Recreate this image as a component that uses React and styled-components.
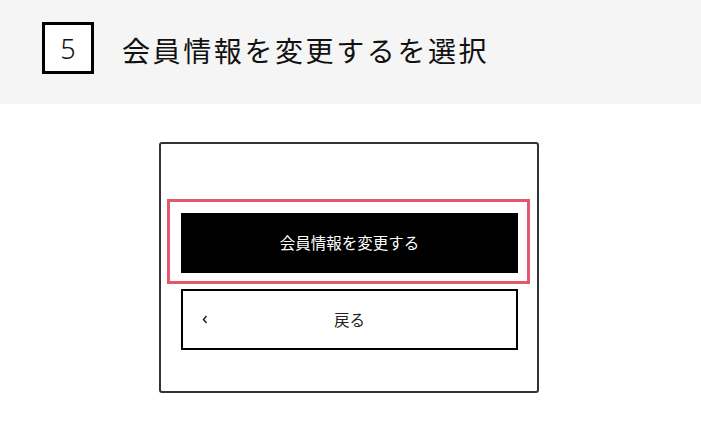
import React from "react";
import styled, { createGlobalStyle } from "styled-components";

const GlobalStyle = createGlobalStyle`
  * {
    box-sizing: border-box;
  }
  body {
    margin: 0;
    background: #fff;
    font-family: "Noto Sans CJK JP", "Noto Sans", sans-serif;
    color: #111;
  }
`;

const Header = styled.div`
  display: flex;
  align-items: center;
  height: 104px;
  padding-left: 42px;
  gap: 28px;
  background: #f5f5f5;
`;

const StepBox = styled.div`
  display: flex;
  align-items: center;
  justify-content: center;
  width: 52px;
  height: 52px;
  margin-top: -8px;
  border: 3px solid #000;
  background: #fff;
  font-family: "Noto Sans", sans-serif;
  font-size: 27px;
  font-weight: 300;
`;

const Title = styled.h1`
  margin: -4px 0 0;
  font-size: 28px;
  font-weight: 400;
  letter-spacing: 2.6px;
  color: #111;
`;

const Main = styled.div`
  display: flex;
  padding: 38px 0 0 159px;
`;

const Card = styled.div`
  width: 380px;
  height: 251px;
  padding: 55px 7px 0 6px;
  border: 2px solid #333;
  border-radius: 3px;
  display: flex;
  flex-direction: column;
  gap: 5px;
`;

const Highlight = styled.div`
  padding: 11px 9px 8px 11px;
  border: 3px solid #e4586e;
`;

const Button = styled.button`
  display: grid;
  grid-template-columns: 1fr auto 1fr;
  align-items: center;
  width: 100%;
  height: ${(p) => (p.$primary ? "60px" : "61px")};
  padding: 0;
  border: ${(p) => (p.$primary ? "none" : "2px solid #000")};
  background: ${(p) => (p.$primary ? "#000" : "#fff")};
  color: ${(p) => (p.$primary ? "#fff" : "#222")};
  font-family: "Noto Sans CJK JP", sans-serif;
  font-size: 15.5px;
  cursor: pointer;
`;

const BackButton = styled(Button)`
  width: auto;
  margin: 0 12px 0 14px;
`;

const Label = styled.span`
  grid-column: 2;
  margin-top: -2px;
`;

const Chevron = styled.svg`
  grid-column: 1;
  justify-self: start;
  margin-left: 19px;
`;

export default function App() {
  return (
    <>
      <GlobalStyle />
      <Header>
        <StepBox>5</StepBox>
        <Title>会員情報を変更するを選択</Title>
      </Header>
      <Main>
        <Card>
          <Highlight>
            <Button $primary>
              <Label>会員情報を変更する</Label>
            </Button>
          </Highlight>
          <BackButton>
            <Chevron width="6" height="9" viewBox="0 0 6 9">
              <polyline
                points="4.5,1 1.5,4.5 4.5,8"
                fill="none"
                stroke="#222"
                strokeWidth="1.5"
              />
            </Chevron>
            <Label>戻る</Label>
          </BackButton>
        </Card>
      </Main>
    </>
  );
}
